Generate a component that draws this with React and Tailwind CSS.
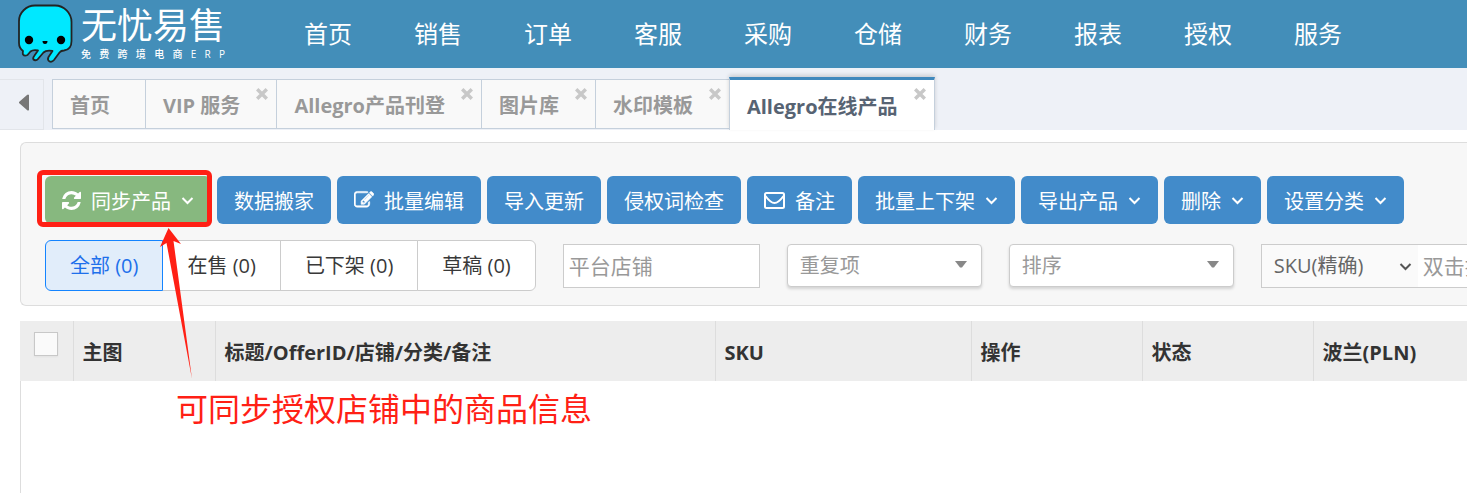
import { useState } from "react";
import clsx from "clsx";

const navItems = ["首页", "销售", "订单", "客服", "采购", "仓储", "财务", "报表", "授权", "服务"];

const tabs = [
  { label: "首页" },
  { label: "VIP 服务", closable: true },
  { label: "Allegro产品刊登", closable: true },
  { label: "图片库", closable: true },
  { label: "水印模板", closable: true },
  { label: "Allegro在线产品", closable: true },
];

const actions = [
  { label: "数据搬家" },
  { label: "批量编辑", icon: EditIcon },
  { label: "导入更新" },
  { label: "侵权词检查" },
  { label: "备注", icon: MailIcon },
  { label: "批量上下架", menu: true },
  { label: "导出产品", menu: true },
  { label: "删除", menu: true },
  { label: "设置分类", menu: true },
];

const statuses = ["全部 (0)", "在售 (0)", "已下架 (0)", "草稿 (0)"];

const columns = [
  { label: "主图", width: "w-[142px]" },
  { label: "标题/OfferID/店铺/分类/备注", width: "w-[500px]" },
  { label: "SKU", width: "w-[256px]" },
  { label: "操作", width: "w-[171px]" },
  { label: "状态", width: "w-[171px]" },
  { label: "波兰(PLN)", width: "" },
];

function Logo() {
  return (
    <svg viewBox="0 0 56 60" className="h-[60px] w-14 shrink-0" aria-hidden="true">
      <path
        d="M18 1.500H38C47 1.500 54.500 9 54.500 18V37C54.500 42 52 46 47 46.500Q44 46.500 42.500 48.500L37 56Q35 58.500 32.500 57.500Q30 56 31.500 53L35.500 47Q29 46 26.500 48.500L20.500 55.500Q18 57 16.500 55.500Q15.500 54 17.500 51.500L21 46.500Q16 45.500 13.500 47.500L10.500 51Q7.500 52.500 6 50.500Q5.500 49 6 47Q2 44 2 39V17C2 9 9 1.500 18 1.500Z"
        fill="#00e8ff"
        stroke="#232323"
        strokeWidth="1.8"
        strokeLinejoin="round"
      />
      <circle cx="12" cy="36" r="4.200" />
      <circle cx="44" cy="36" r="4.200" />
      <path d="M25.500 37h5a2.500 3 0 0 1-5 0z" />
    </svg>
  );
}

function RefreshIcon() {
  return (
    <svg viewBox="0 0 1536 1536" className="size-[19px]" fill="currentColor" aria-hidden="true">
      <path d="M1511 928q0 5-1 7-64 268-268 434.500t-478 166.500q-146 0-282.500-55t-243.500-157l-129 129q-19 19-45 19t-45-19-19-45v-448q0-26 19-45t45-19h448q26 0 45 19t19 45-19 45l-137 137q71 66 161 102t187 36q134 0 250-65t186-179q11-17 53-117 8-23 30-23h192q13 0 22.500 9.500t9.500 22.500zm25-800v448q0 26-19 45t-45 19h-448q-26 0-45-19t-19-45 19-45l138-138q-148-137-349-137-134 0-250 65t-186 179q-11 17-53 117-8 23-30 23h-199q-13 0-22.500-9.500t-9.500-22.500v-7q65-268 270-434.500t480-166.500q146 0 284 55.500t245 156.500l130-129q19-19 45-19t45 19 19 45z" />
    </svg>
  );
}

function EditIcon() {
  return (
    <svg viewBox="0 0 1792 1792" className="size-5" fill="currentColor" stroke="currentColor" strokeWidth="50" aria-hidden="true">
      <path d="M888 1184l116-116-152-152-116 116v56h96v96h56zm440-720q-16-16-33 1l-350 350q-17 17-1 33t33-1l350-350q17-17 1-33zm80 594v190q0 119-84.500 203.500t-203.500 84.500h-832q-119 0-203.500-84.500t-84.500-203.500v-832q0-119 84.500-203.500t203.500-84.500h832q63 0 117 25 15 7 18 23 3 17-9 29l-49 49q-14 14-32 8-23-6-45-6h-832q-66 0-113 47t-47 113v832q0 66 47 113t113 47h832q66 0 113-47t47-113v-126q0-13 9-22l64-64q15-15 35-7t20 29zm-96-738l288 288-672 672h-288v-288zm444 132l-92 92-288-288 92-92q28-28 68-28t68 28l152 152q28 28 28 68t-28 68z" />
    </svg>
  );
}

function MailIcon() {
  return (
    <svg viewBox="0 0 21 17" className="h-[17px] w-[21px]" fill="none" stroke="currentColor" strokeWidth="2" aria-hidden="true">
      <rect x="1" y="1" width="19" height="15" rx="1.500" />
      <path d="M1.500 4C4 7.500 8 11 10.500 11S17 7.500 19.500 4" />
    </svg>
  );
}

function ChevronIcon({ className }) {
  return (
    <svg viewBox="0 0 13 13" className={clsx("size-[13px]", className)} fill="none" stroke="currentColor" strokeWidth="2" aria-hidden="true">
      <path d="M1.500 4l5 5 5-5" />
    </svg>
  );
}

function CloseIcon() {
  return (
    <svg viewBox="0 0 12 12" className="size-3" stroke="currentColor" strokeWidth="3.4" aria-hidden="true">
      <path d="M1.200 1.200l9.600 9.600M10.800 1.200L1.200 10.800" />
    </svg>
  );
}

function TabBar() {
  const [active, setActive] = useState(5);

  return (
    <div className="flex h-[62px] items-end bg-[#eef1f7]">
      <button
        aria-label="向左滚动"
        className="mr-2 flex h-[51px] w-11 items-center justify-center border border-l-0 border-[#e2e5ea] pl-1 text-[#777]"
      >
        <svg viewBox="0 0 10 17" className="mb-1 h-[17px] w-[10px]" fill="currentColor" aria-hidden="true">
          <path d="M10 1v15q-1 1-2 0L0 9q-.5-.5 0-1L8 1q1-1 2 0z" />
        </svg>
      </button>
      {tabs.map((tab, i) => (
        <div
          key={tab.label}
          className={clsx(
            "relative border-l font-bold",
            i === active
              ? "h-[53px] border-r border-t-3 border-[#c5d0dc] border-t-[#4089bd] bg-white text-[#576373] shadow-[0_-2px_4px_rgba(0,0,0,0.15)]"
              : "mb-px h-[50px] border-y border-[#c5d0dc] bg-[#f9f9f9] text-[#999]"
          )}
        >
          <button
            onClick={() => setActive(i)}
            className={clsx("h-full pt-[3px] pl-[17px] whitespace-nowrap", tab.closable ? "pr-9" : "pr-[35px]")}
          >
            {tab.label}
          </button>
          {tab.closable && (
            <button aria-label={"关闭 " + tab.label} className="absolute top-2 right-2 text-[#c8c8c8]">
              <CloseIcon />
            </button>
          )}
        </div>
      ))}
    </div>
  );
}

function ActionButton({ label, icon: Icon, menu, className }) {
  return (
    <button
      className={clsx(
        "flex h-12 items-center gap-[10px] rounded-md px-[17px] whitespace-nowrap text-white",
        className || "bg-[#428bca]"
      )}
    >
      {Icon && <Icon />}
      <span className="pt-[3px]">{label}</span>
      {menu && <ChevronIcon />}
    </button>
  );
}

function DropDown({ label, width }) {
  return (
    <div className={clsx("relative shrink-0", width)}>
      <select
        aria-label={label}
        className="h-[43px] w-full appearance-none rounded-sm border border-[#ccc] bg-white px-3 text-[#999] shadow-[0_2px_3px_rgba(0,0,0,0.15)]"
      >
        <option>{label}</option>
      </select>
      <svg viewBox="0 0 12 7" className="pointer-events-none absolute top-[17px] right-[15px] h-[7px] w-3" fill="#888" aria-hidden="true">
        <path d="M0 0h12L7 6.500H5z" />
      </svg>
    </div>
  );
}

function Toolbar() {
  const [status, setStatus] = useState(0);

  return (
    <div className="mt-3 ml-5 rounded-l-md border border-r-0 border-[#ddd] bg-[#f7f7f7] pt-[33px] pb-[14px] pl-6">
      <div className="flex gap-[6px]">
        <div className="relative">
          <ActionButton label="同步产品" icon={RefreshIcon} menu className="bg-[#87b87f]" />
          {/* highlight frame and the arrow of the note below */}
          <div className="pointer-events-none absolute -top-[6px] -right-px -bottom-[3px] -left-2 rounded-md border-5 border-[#ff2015]" />
          <svg viewBox="0 0 36 152" className="pointer-events-none absolute top-[52px] left-[115px] z-10 h-[152px] w-9" fill="#ff2015" aria-hidden="true">
            <path d="M8.500 0L21 16L13.500 13L32 151L6.500 15L0 19z" />
          </svg>
        </div>
        {actions.map((action) => (
          <ActionButton key={action.label} {...action} />
        ))}
      </div>

      <div className="mt-4 flex items-center gap-[27px]">
        <div className="flex shrink-0 text-[#393939]">
          {statuses.map((item, i) => (
            <button
              key={item}
              onClick={() => setStatus(i)}
              className={clsx(
                "h-[51px] border px-6 whitespace-nowrap not-first:-ml-px first:rounded-l-md last:rounded-r-md",
                i === status ? "z-1 border-[#1484ff] bg-[#e1edfa] text-[#1e70eb]" : "border-[#ccc] bg-white"
              )}
            >
              {item}
            </button>
          ))}
        </div>
        <input
          aria-label="平台店铺"
          placeholder="平台店铺"
          className="h-11 w-[197px] shrink-0 border border-[#ccc] bg-white px-[5px] text-[21px] placeholder:text-[#999]"
        />
        <DropDown label="重复项" width="w-[195px]" />
        <DropDown label="排序" width="w-[225px]" />
        <div className="flex h-11 min-w-0 flex-1 overflow-hidden border border-r-0 border-[#ccc] bg-white">
          <div className="relative w-39 shrink-0">
            <select aria-label="搜索类型" className="h-full w-full appearance-none bg-[#fafafa] pl-3 text-[#666]">
              <option>SKU(精确)</option>
            </select>
            <ChevronIcon className="pointer-events-none absolute top-[15px] right-[6px] text-[#555]" />
          </div>
          <input
            aria-label="搜索内容"
            placeholder="双击批量搜索"
            className="min-w-0 flex-1 pl-[5px] text-[21px] placeholder:text-[#999]"
          />
        </div>
      </div>
    </div>
  );
}

function ProductTable() {
  return (
    <table className="w-full table-fixed border-collapse">
      <thead>
        <tr className="h-15 bg-[#ededed] text-left text-[#333]">
          <th className="w-[53px] pt-[11px] pl-[14px] align-top">
            <input
              type="checkbox"
              aria-label="全选"
              className="block size-6 appearance-none border border-[#c8c8c8] bg-[#fafafa] shadow-xs checked:bg-[#428bca]"
            />
          </th>
          {columns.map((col) => (
            <th key={col.label} className={clsx("border-l border-[#ddd] pt-[3px] pl-[9px] font-bold whitespace-nowrap", col.width)}>
              {col.label}
            </th>
          ))}
        </tr>
      </thead>
    </table>
  );
}

const App = () => {
  return (
    <div className="flex min-h-screen flex-col overflow-x-hidden bg-white font-['Open_Sans','Noto_Sans_CJK_SC',sans-serif] text-[20px] leading-7">
      <header className="flex h-17 items-center bg-[#438eb9] pl-[17px] text-white">
        <a href="#" className="flex items-center gap-2">
          <Logo />
          <span className="flex w-36 flex-col">
            <span className="text-[36px] leading-10">无忧易售</span>
            <span className="flex justify-between text-[10px] leading-4 font-medium">
              {[..."免费跨境电商ERP"].map((char) => (
                <span key={char}>{char}</span>
              ))}
            </span>
          </span>
        </a>
        <nav className="ml-12 flex">
          {navItems.map((item) => (
            <a key={item} href="#" className="w-[110px] text-center text-[24px] leading-17 whitespace-nowrap">
              {item}
            </a>
          ))}
        </nav>
      </header>
      <TabBar />
      <Toolbar />
      <main className="mt-[15px] ml-5 flex flex-1 flex-col">
        <ProductTable />
        <div className="flex-1 border-l border-[#ddd] pt-2 pl-[155px]">
          <p className="text-[32px] leading-10 whitespace-nowrap text-[#ff2015]">可同步授权店铺中的商品信息</p>
        </div>
      </main>
    </div>
  );
};

export default App;
